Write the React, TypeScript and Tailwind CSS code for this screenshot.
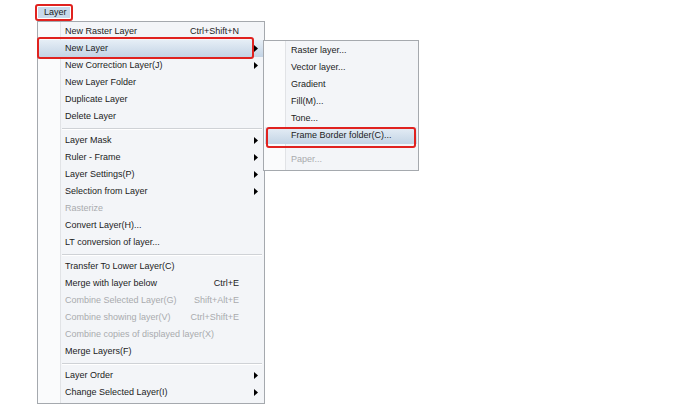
import React from "react";

type Item =
  | { kind: "sep" }
  | { kind: "gap" }
  | { kind: "item"; label: string; shortcut?: string; arrow?: boolean; disabled?: boolean; hl?: boolean };

const main: Item[] = [
  { kind: "item", label: "New Raster Layer", shortcut: "Ctrl+Shift+N" },
  { kind: "item", label: "New Layer", arrow: true, hl: true },
  { kind: "item", label: "New Correction Layer(J)", arrow: true },
  { kind: "item", label: "New Layer Folder" },
  { kind: "item", label: "Duplicate Layer" },
  { kind: "item", label: "Delete Layer" },
  { kind: "sep" },
  { kind: "item", label: "Layer Mask", arrow: true },
  { kind: "item", label: "Ruler - Frame", arrow: true },
  { kind: "item", label: "Layer Settings(P)", arrow: true },
  { kind: "item", label: "Selection from Layer", arrow: true },
  { kind: "item", label: "Rasterize", disabled: true },
  { kind: "item", label: "Convert Layer(H)..." },
  { kind: "item", label: "LT conversion of layer..." },
  { kind: "sep" },
  { kind: "item", label: "Transfer To Lower Layer(C)" },
  { kind: "item", label: "Merge with layer below", shortcut: "Ctrl+E" },
  { kind: "item", label: "Combine Selected Layer(G)", shortcut: "Shift+Alt+E", disabled: true },
  { kind: "item", label: "Combine showing layer(V)", shortcut: "Ctrl+Shift+E", disabled: true },
  { kind: "item", label: "Combine copies of displayed layer(X)", disabled: true },
  { kind: "item", label: "Merge Layers(F)" },
  { kind: "sep" },
  { kind: "item", label: "Layer Order", arrow: true },
  { kind: "item", label: "Change Selected Layer(I)", arrow: true },
];

const sub: Item[] = [
  { kind: "item", label: "Raster layer..." },
  { kind: "item", label: "Vector layer..." },
  { kind: "item", label: "Gradient" },
  { kind: "item", label: "Fill(M)..." },
  { kind: "item", label: "Tone..." },
  { kind: "item", label: "Frame Border folder(C)...", hl: true },
  { kind: "gap" },
  { kind: "item", label: "Paper...", disabled: true },
];

function Arrow() {
  return (
    <svg width="4" height="7" viewBox="0 0 4 7" className="block">
      <polygon points="0,0 4,3.5 0,7" fill="#000" />
    </svg>
  );
}

function Rows({ items, gutter }: { items: Item[]; gutter: number }) {
  return (
    <>
      {items.map((it, i) => {
        if (it.kind === "sep")
          return (
            <div key={i} className="h-[7px] flex flex-col justify-center pl-[24px] pr-[2px]">
              <div className="h-px bg-[#cfd2d6]" />
              <div className="h-px bg-white" />
            </div>
          );
        if (it.kind === "gap") return <div key={i} className="h-[7px]" />;
        return (
          <div
            key={i}
            className={
              "relative flex items-center h-[17px] mx-px " +
              (it.hl ? "bg-gradient-to-b from-[#e6eef6] to-[#c3d4e5]" : "")
            }
          >
            <span
              className={
                "flex-1 whitespace-nowrap " + (it.disabled ? "text-[#a9abae]" : "text-[#1c1c1c]")
              }
              style={{ paddingLeft: gutter }}
            >
              {it.label}
            </span>
            {it.shortcut && (
              <span className={"whitespace-nowrap " + (it.disabled ? "text-[#a9abae]" : "text-[#1c1c1c]")}>
                {it.shortcut}
              </span>
            )}
            <span className="w-[24px] h-full flex items-center justify-end pr-[5px]">
              {it.arrow && <Arrow />}
            </span>
          </div>
        );
      })}
    </>
  );
}

export default function App() {
  return (
    <div className="relative w-[697px] h-[410px] bg-white overflow-hidden font-['Liberation_Sans',Arial,sans-serif] text-[9px] leading-none">
      {/* Menu bar label */}
      <div className="pl-[35px] pt-[4px]">
        <div className="w-[38px] h-[17px] border-2 border-[#e0221f] rounded-[3px] p-px">
          <div className="h-full bg-[#c8d9eb] flex items-center pl-[6px] text-[#1c1c1c]">Layer</div>
        </div>
      </div>

      {/* Main menu */}
      <div className="relative ml-[37px] w-[228px] h-[383px] border border-[#a5a9ae] bg-[#f3f5f8] pt-px">
        <div className="absolute left-0 top-0 bottom-0 w-[23px] bg-[#fafbfc] border-r border-[#e1e3e6]" />
        <div className="relative">
          <Rows items={main} gutter={26} />
        </div>
      </div>

      {/* Red highlight around New Layer */}
      <div className="absolute left-[37px] top-[37px] w-[217px] h-[22px] border-2 border-[#e0221f] rounded-[3px]" />

      {/* Submenu */}
      <div className="absolute left-[263px] top-[40px] w-[156px] h-[131px] border border-[#a5a9ae] bg-[#f3f5f8] pt-px">
        <div className="absolute left-0 top-0 bottom-0 w-[22px] bg-[#fafbfc] border-r border-[#e1e3e6]" />
        <div className="relative">
          <Rows items={sub} gutter={26} />
        </div>
      </div>

      {/* Red highlight around Frame Border folder */}
      <div className="absolute left-[266px] top-[127px] w-[150px] h-[21px] border-2 border-[#e0221f] rounded-[3px]" />
    </div>
  );
}
